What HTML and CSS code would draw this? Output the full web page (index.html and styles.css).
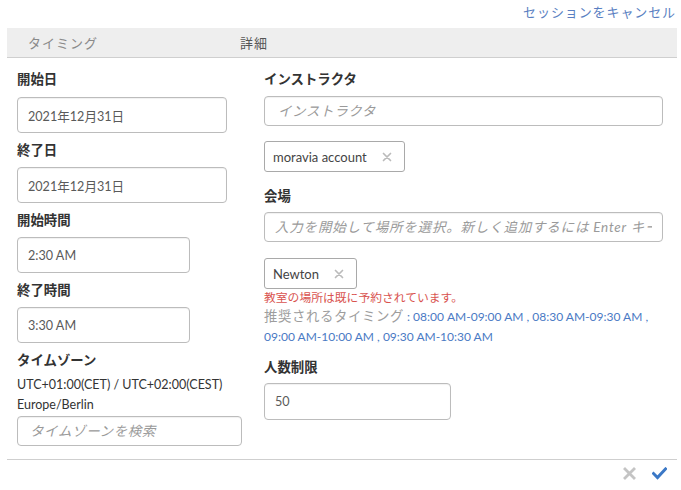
FILE: index.html
```html
<!DOCTYPE html>
<html lang="ja">
<head>
<meta charset="utf-8">
<title>セッション</title>
<link rel="stylesheet" href="styles.css">
</head>
<body>
<div class="page">
  <div class="topbar"><a class="cancel" href="#">セッションをキャンセル</a></div>
  <div class="tabs">
    <div class="tab tab-timing">タイミング</div>
    <div class="tab tab-detail">詳細</div>
  </div>
  <div class="content">
    <div class="col col-left">
      <div class="label">開始日</div>
      <input class="field field-date first" type="text" value="2021年12月31日">
      <div class="label">終了日</div>
      <input class="field field-date" type="text" value="2021年12月31日">
      <div class="label">開始時間</div>
      <input class="field field-time" type="text" value="2:30 AM">
      <div class="label">終了時間</div>
      <input class="field field-time" type="text" value="3:30 AM">
      <div class="label">タイムゾーン</div>
      <div class="tz-text tz-first">UTC+01:00(CET) / UTC+02:00(CEST)</div>
      <div class="tz-text">Europe/Berlin</div>
      <input class="field field-search" type="text" placeholder="タイムゾーンを検索">
    </div>
    <div class="col col-right">
      <div class="label">インストラクタ</div>
      <input class="field field-wide" type="text" placeholder="インストラクタ">
      <div class="chip-row chip-row-1">
        <span class="chip">moravia account<svg class="chip-x" width="10" height="10" viewBox="0 0 10 10"><path d="M1.5 1.5L8.5 8.5M8.5 1.5L1.5 8.5" stroke="#bbb" stroke-width="1.7" stroke-linecap="round"/></svg></span>
      </div>
      <div class="label">会場</div>
      <input class="field field-wide field-venue" type="text" placeholder="入力を開始して場所を選択。新しく追加するには Enter キー、">
      <div class="chip-row chip-row-2">
        <span class="chip">Newton<svg class="chip-x" width="10" height="10" viewBox="0 0 10 10"><path d="M1.5 1.5L8.5 8.5M8.5 1.5L1.5 8.5" stroke="#bbb" stroke-width="1.7" stroke-linecap="round"/></svg></span>
      </div>
      <div class="error">教室の場所は既に予約されています。</div>
      <div class="suggest">
        <div class="suggest-line"><span class="suggest-label">推奨されるタイミング</span><span class="times"> : 08:00 AM-09:00 AM , 08:30 AM-09:30 AM ,</span></div>
        <div class="suggest-line times">09:00 AM-10:00 AM , 09:30 AM-10:30 AM</div>
      </div>
      <div class="label label-limit">人数制限</div>
      <input class="field field-limit" type="text" value="50">
    </div>
  </div>
  <div class="footer">
    <svg class="icon-x" width="13" height="13" viewBox="0 0 13 13"><path d="M2 2L11 11M11 2L2 11" stroke="#c4c4c4" stroke-width="2.8" stroke-linecap="square"/></svg>
    <svg class="icon-check" width="15" height="13" viewBox="0 0 15 13"><path d="M1.5 6.5L5.5 10.5L13.5 2" fill="none" stroke="#3b78c6" stroke-width="3" stroke-linecap="square"/></svg>
  </div>
</div>
</body>
</html>
```
FILE: styles.css
```css
html, body {
  margin: 0;
  padding: 0;
  background: #ffffff;
}
body {
  font-family: "Lato", "Noto Sans CJK JP", sans-serif;
  font-size: 13px;
  color: #333333;
}
.page {
  width: 681px;
}
.topbar {
  height: 28px;
  display: flex;
  justify-content: flex-end;
  padding-right: 5px;
}
.cancel {
  display: block;
  line-height: 25px;
  color: #5a7fc2;
  text-decoration: none;
  letter-spacing: 0.9px;
  font-size: 13px;
}
.tabs {
  margin: 0 4px 0 7px;
  height: 29px;
  background: #eeeeee;
  border-bottom: 1px solid #cfcfcf;
  display: flex;
  align-items: center;
  font-size: 13px;
  letter-spacing: 1px;
}
.tab-timing {
  box-sizing: border-box;
  width: 233px;
  padding-left: 21px;
  color: #8a8a8a;
}
.tab-detail {
  color: #555555;
}
.content {
  display: grid;
  grid-template-columns: 247px 1fr;
  padding: 11px 18px 0 17px;
}
.col {
  display: flex;
  flex-direction: column;
  align-items: flex-start;
}
.label {
  font-weight: bold;
  font-size: 13.4px;
  line-height: 20px;
  color: #333333;
  margin-bottom: 7px;
}
.field {
  display: block;
  box-sizing: border-box;
  height: 36px;
  border: 1px solid #bcbcbc;
  border-radius: 4px;
  padding: 0 10px;
  font-family: inherit;
  font-size: 12.6px;
  color: #5a5a5a;
  background: #ffffff;
  box-shadow: inset 0 1px 1px rgba(0, 0, 0, 0.06);
  margin: 0 0 7px 0;
  outline: none;
}
.field::placeholder {
  color: #9a9a9a;
  font-style: italic;
  font-size: 13.5px;
  letter-spacing: 0.6px;
}
.field-venue::placeholder {
  letter-spacing: 0.8px;
}
.field.first {
  margin-top: 1px;
}
.field-date {
  width: 210px;
}
.field-time {
  width: 173px;
}
.field-search {
  width: 225px;
  height: 30px;
  margin: 1px 0 0 0;
  padding-left: 12px;
}
.tz-text {
  line-height: 20px;
  font-size: 12.5px;
  color: #333333;
}
.tz-first {
  margin-top: -2px;
}
.field-wide {
  width: 100%;
  height: 30px;
  margin-bottom: 15px;
  padding-left: 13px;
}
.field-venue {
  padding-left: 10px;
}
.chip-row {
  margin-bottom: 14px;
}
.chip-row-2 {
  margin-bottom: 0;
}
.chip {
  display: inline-flex;
  align-items: center;
  box-sizing: border-box;
  height: 31px;
  border: 1px solid #a9a9a9;
  border-radius: 3px;
  padding: 0 12px 0 8px;
  color: #444444;
  font-size: 13px;
}
.chip-x {
  margin-left: 15px;
}
.col-right .label {
  margin-bottom: 6px;
}
.col-right .label:first-child {
  margin-bottom: 7px;
}
.col-right .field-wide + .chip-row-2 {
  margin-top: 1px;
}
.error {
  font-size: 11.8px;
  line-height: 16px;
  color: #d9534f;
  margin-top: 1px;
}
.suggest {
  font-size: 12px;
}
.suggest-line {
  line-height: 20px;
  white-space: nowrap;
}
.suggest-label {
  color: #9d9d9d;
  font-size: 13.4px;
  letter-spacing: 0.6px;
}
.times {
  color: #4a7ac4;
  font-size: 12px;
}
.label-limit {
  margin-top: 10px;
}
.field-limit {
  width: 187px;
  height: 37px;
  margin-bottom: 0;
}
.footer {
  margin: 13px 4px 0 7px;
  border-top: 1px solid #cfcfcf;
  height: 27px;
  display: flex;
  justify-content: flex-end;
  align-items: center;
  gap: 16px;
  padding-right: 10px;
}
.icon-x, .icon-check {
  display: block;
}
```
